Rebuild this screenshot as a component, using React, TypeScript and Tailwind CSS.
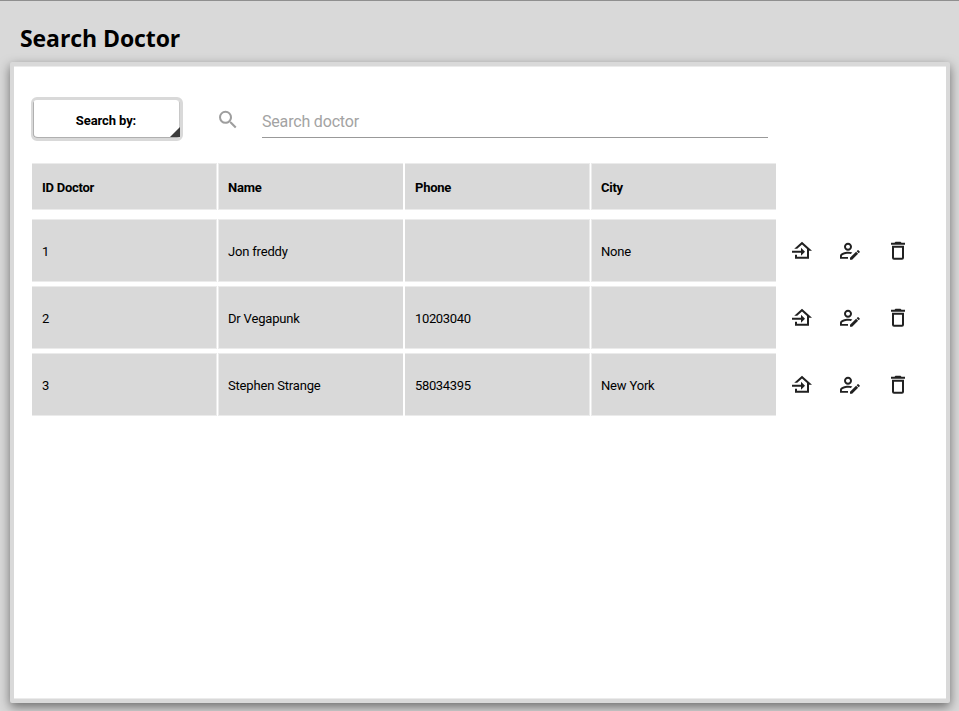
const cellEdges = [
  'border-r',
  'border-l ml-px',
  'border-r ml-0.5',
  'border-l ml-px',
];

const columns = ['ID Doctor', 'Name', 'Phone', 'City'];

const doctors = [
  ['1', 'Jon freddy', '', 'None'],
  ['2', 'Dr Vegapunk', '10203040', ''],
  ['3', 'Stephen Strange', '58034395', 'New York'],
];

const icons = {
  magnify:
    'M9.5 3A6.5 6.5 0 0 1 16 9.5C16 11.11 15.41 12.59 14.44 13.73L14.71 14H15.5L20.5 19L19 20.5L14 15.5V14.71L13.73 14.44C12.59 15.41 11.11 16 9.5 16A6.5 6.5 0 0 1 9.5 3M9.5 5C7 5 5 7 5 9.5S7 14 9.5 14 14 12 14 9.5 12 5 9.5 5Z',
  homeImport:
    'M15 13L11 17V14H2V12H11V9L15 13M5 20V16H7V18H17V10.19L12 5.69L7.21 10H4.22L12 3L22 12H19V20H5Z',
  accountEdit:
    'M2 17V20H10V18.11H3.9V17C3.9 16.36 7.03 14.9 10 14.9C10.96 14.91 11.91 15.04 12.83 15.28L14.35 13.76C12.95 13.29 11.5 13.03 10 13C7.33 13 2 14.33 2 17M10 4C7.79 4 6 5.79 6 8S7.79 12 10 12 14 10.21 14 8 12.21 4 10 4M10 10C8.9 10 8 9.11 8 8S8.9 6 10 6 12 6.9 12 8 11.11 10 10 10M21.7 13.35L20.7 14.35L18.65 12.35L19.65 11.35C19.86 11.14 20.21 11.14 20.42 11.35L21.7 12.63C21.91 12.84 21.91 13.14 21.7 13.35M12 18.94L18.06 12.88L20.11 14.88L14.11 21H12V18.94',
  trash:
    'M6 19A2 2 0 0 0 8 21H16A2 2 0 0 0 18 19V7H6V19M8 9H16V19H8V9M15.5 4L14.5 3H9.5L8.5 4H5V6H19V4H15.5Z',
};

function Icon({ path, className }: { path: string; className: string }) {
  return (
    <svg viewBox="0 0.2 24 24" className={`size-6 shrink-0 ${className}`} fill="currentColor">
      <path d={path} />
    </svg>
  );
}

function Cells({ values, height }: { values: string[]; height: string }) {
  return (
    <div className="flex">
      {values.map((value, i) => (
        <div
          key={i}
          className={`flex w-[185px] items-center border-y border-[#ebebeb] bg-[#d9d9d9] pt-0.5 ${height} ${cellEdges[i]} ${i % 2 === 0 ? 'pl-2.5' : 'pl-[9px]'} ${/^\d{2}/.test(value) ? 'tracking-[-0.35px]' : ''}`}
        >
          {value}
        </div>
      ))}
    </div>
  );
}

export default function App() {
  return (
    <div className="flex h-[711px] w-[959px] flex-col overflow-hidden border-t border-[#8f8f8f] bg-[#d9d9d9] font-['Roboto',sans-serif] text-[13px] tracking-[-0.18px] text-black">
      <h1 className="h-[61px] pl-5 pt-5 font-['Open_Sans',sans-serif] text-[23px]/[34px] font-bold tracking-[-0.08px]">
        Search Doctor
      </h1>
      <main className="ml-2.5 h-[641px] w-[940px] rounded-[2px] border-4 border-[#d9d9d9] bg-white pl-[18px] shadow-[0_4px_11px_rgba(0,0,0,0.5),inset_0_1px_#ebebeb,inset_0_-1px_#ebebeb]">
        <div className="flex pt-[31px]">
          <button className="relative -ml-px h-11 w-[152px] rounded-[6px] border-3 border-l-2 border-[#d9d9d9] bg-white pr-px pt-[3px] font-bold tracking-[-0.1px] shadow-[inset_1px_-1px_#b0b0b0,inset_-1px_0_#c8c8c8]">
            Search by:
            <svg viewBox="0 0 10 10" className="absolute bottom-px right-0 size-2.5">
              <path d="M10 0V10H0Z" fill="#3b3b3b" />
            </svg>
          </button>
          <Icon path={icons.magnify} className="ml-[33px] mt-[11px] text-[#9e9e9e]" />
          <div className="ml-[22px] h-[41px] w-[506px] border-b border-[#999] pt-[13px] text-base/6 text-[#a3a3a3]">
            Search doctor
          </div>
        </div>
        <div className="mt-[22px] font-bold tracking-[-0.25px]">
          <Cells values={columns} height="h-[47px]" />
        </div>
        <div className="mt-[9px] flex flex-col gap-1">
          {doctors.map((doctor) => (
            <div key={doctor[0]} className="flex items-center">
              <Cells values={doctor} height="h-[63px]" />
              <div className="ml-3.5 flex gap-6 text-[#212121]">
                <Icon path={icons.homeImport} className="" />
                <Icon path={icons.accountEdit} className="" />
                <Icon path={icons.trash} className="" />
              </div>
            </div>
          ))}
        </div>
      </main>
    </div>
  );
}
